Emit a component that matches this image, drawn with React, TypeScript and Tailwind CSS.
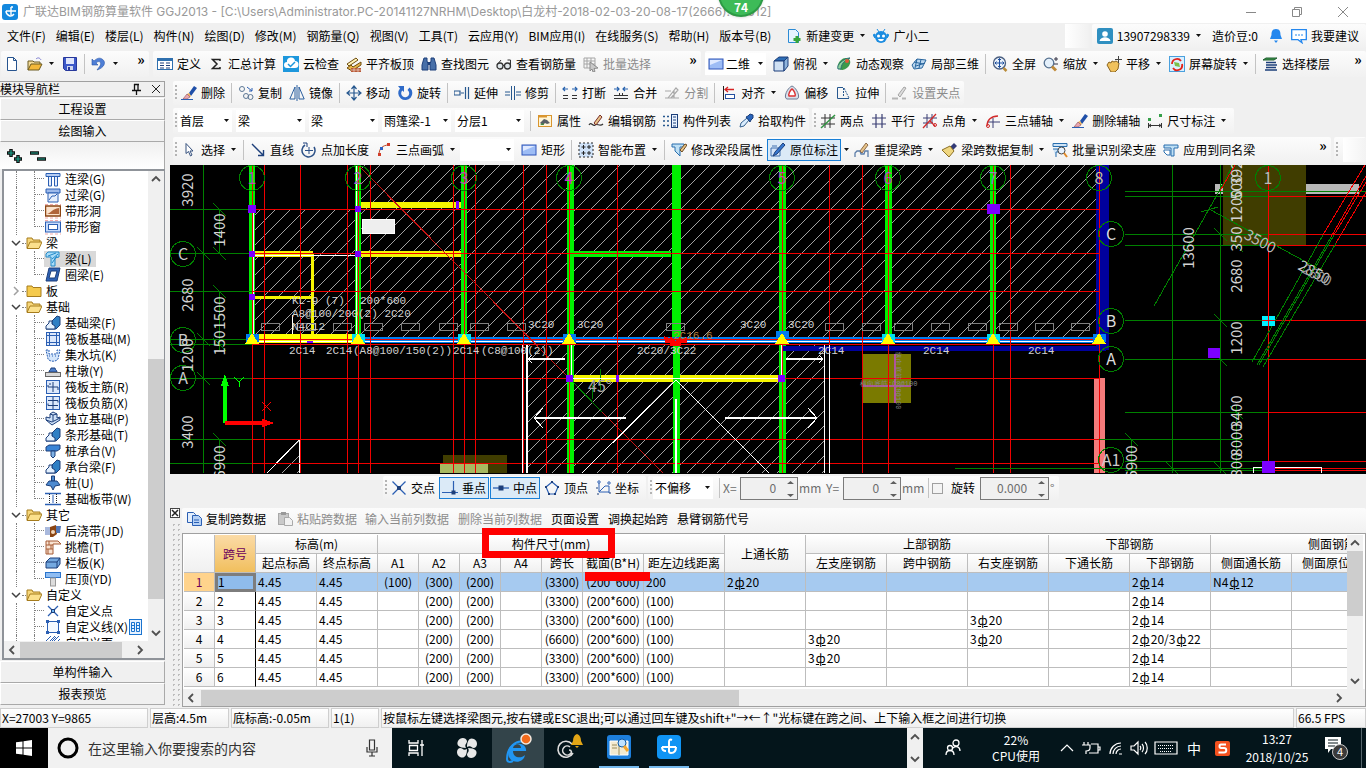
import type { ReactNode } from 'react';

const B = '#2b5fb3';
const N = '#1d3f7a';
const G = '#8c8c8c';

const box = (
  <>
    <rect x="1" y="3" width="14" height="10" fill="#9dbcf5" stroke="#2f55b8" />
    <path d="M2 4h12L2 9z" fill="#dfe9ff" />
  </>
);
const eraser = (
  <>
    <path d="M8 8l5-7 3 2-6 8z" fill="#1f4fa8" />
    <path d="M8 8l2 3-1 1-3-3z" fill="#f0b35a" />
    <path d="M6 9l3 3-3 2H2z" fill="#e9a6b0" stroke="#8a4b55" strokeWidth=".6" />
    <path d="M0 14.5h12" stroke={B} />
  </>
);
const footing = (
  <>
    <path d="M1 14h10l4-4V2l-3-1-5 5v4z" fill="#2f7fc4" stroke={N} />
    <path d="M1 14v-3l3-3V6h3v3l3 2v3z" fill="#e4f1ff" stroke={N} />
  </>
);
const folderOpen = (
  <>
    <path d="M1 13V3h5l1 2h7v3" fill="#f7d77b" stroke="#a67c1d" />
    <path d="M1 13.5L4 7h12l-3 6.5z" fill="#fbe08c" stroke="#a67c1d" />
  </>
);

const glyphs: Record<string, ReactNode> = {
  newDoc: <path d="M3.5 1.5h6l3 3v10h-9zM9.5 1.5v3h3" fill="#fff" stroke="#27548f" />,
  open: (
    <>
      <path d="M1 14V5h5l1 1h6v3" fill="#f5dc9a" stroke="#6b5a20" />
      <path d="M1 14l3-6h11l-3 6z" fill="#f3b83a" stroke="#6b5a20" />
      <path d="M9 3c2-2 4-1 5 1" fill="none" stroke="#7b7bd0" />
    </>
  ),
  save: (
    <>
      <path d="M1.500 1.500h13v13h-11l-2-2z" fill="#3c58c9" stroke="#27389b" />
      <rect x="4" y="2" width="8" height="6" fill="#dfe5fb" />
      <rect x="5" y="10" width="6" height="4" fill="#cfd6ee" />
      <rect x="6" y="11" width="2" height="3" fill="#27389b" />
    </>
  ),
  undo: <path d="M1 3v6h6L5 7c3-3 6-1 4 3l-3 4c7-2 10-8 5-11C8 1 5 3 3 5z" fill="#4f7fd6" stroke="#2855a8" strokeWidth=".6" />,
  define: (
    <>
      <rect x=".5" y="2.500" width="15" height="11" fill="#fff" stroke="#2e6fae" />
      <path d="M1 4h14" stroke="#2e6fae" strokeWidth="2" />
      <path d="M3 7h4M3 9.500h4M3 12h4M9 7h4M9 9.500h4M9 12h4" stroke={N} />
    </>
  ),
  sigma: <path d="M12 5V3.500H4.500L9 8l-4.500 4.500H12V11" fill="none" stroke="#222" strokeWidth="1.500" />,
  cloud: (
    <>
      <rect width="16" height="16" fill="#1d97dc" />
      <path d="M4 12a3 3 0 010-6 4 4 0 018-1 3.500 3.500 0 010 7z" fill="#fff" />
      <path d="M5 8l2.500 2.500L12 6" fill="none" stroke="#1d97dc" strokeWidth="1.500" />
    </>
  ),
  slab: (
    <>
      <path d="M1 8l9-6 2 2-9 6z" fill="#fff3b8" stroke="#6e4c0d" />
      <path d="M1 12l4-3 2 2 8-5v3l-9 6z" fill="#e8b54a" stroke="#6e4c0d" />
      <path d="M5 12h10v4H5z" fill="#b85835" />
      <path d="M5 14h10M8 12v4M12 12v4" stroke="#fff" strokeWidth=".5" />
    </>
  ),
  binoc: (
    <>
      <path d="M3 2h3v3l1 3v6H1V9zM13 2h-3v3L9 8v6h6V9z" fill="#476fa8" stroke={N} />
      <path d="M7 6h2v3H7z" fill={N} />
    </>
  ),
  glasses: (
    <>
      <circle cx="4" cy="10" r="3" fill="#dfe6ea" stroke="#333" strokeWidth="1.300" />
      <circle cx="11.500" cy="10" r="3" fill="#dfe6ea" stroke="#333" strokeWidth="1.300" />
      <path d="M7 9.500h1.500M1 9l4-5M14.500 9V4h-3" fill="none" stroke="#333" />
    </>
  ),
  batch: (
    <>
      <path d="M1 2h11v10H1zM1 5h11M1 8h11M4 2v10M8 2v10" fill="none" stroke="#a5a5a5" />
      <path d="M7 6l8 6-4 .500 1 3-2 .500-1-3-2 2z" fill="#c9c9c9" stroke={G} />
    </>
  ),
  rect: box,
  cube: (
    <>
      <path d="M1 5l5-4h9l-4 4z" fill="#2d6db5" stroke={N} />
      <path d="M1 5h10v10H1z" fill="#cfe0f3" stroke={N} />
      <path d="M11 5l4-4v9l-4 5z" fill="#8fb4dc" stroke={N} />
    </>
  ),
  orbit: (
    <>
      <ellipse cx="8" cy="8" rx="7" ry="5" transform="rotate(-40 8 8)" fill="#3b9a4c" />
      <path d="M2 13c-2-4 6-11 12-11-2 1-9 4-9 11z" fill="#8ed49a" stroke="#2a6e74" />
      <circle cx="11" cy="5" r="2" fill="#e05a3a" />
    </>
  ),
  part3d: (
    <>
      <path d="M1 9l5-6 9 1-4 8-8 1z" fill="#b9d6ef" stroke="#28659d" />
      <path d="M3 6l9 2M6 3l-2 9M10 3.500L8 12M14 7L5 10" fill="none" stroke="#28659d" />
    </>
  ),
  full: (
    <>
      <circle cx="7.500" cy="7" r="6" fill="#eaf2fb" stroke="#4b5f80" strokeWidth="1.300" />
      <path d="M7.500 2.500v9M3 7h9M6 4l1.500-1.500L9 4M6 10l1.500 1.500L9 10M4.500 5.500L3 7l1.500 1.500M10.500 5.500L12 7l-1.500 1.500" fill="none" stroke="#1d4f9f" />
      <path d="M11.500 12l3 3" stroke="#b98c3a" strokeWidth="2.500" />
    </>
  ),
  zoom: (
    <>
      <circle cx="6" cy="7" r="4.800" fill="#e4f0fb" stroke="#55708f" strokeWidth="1.300" />
      <path d="M9 10.500l4 4" stroke="#c08a3a" strokeWidth="3" />
      <path d="M11 3h4M13 1v4M11 8h4" stroke="#334" />
    </>
  ),
  pan: (
    <>
      <path d="M1 9l2-3 2 1 1-2 2 1 2-1 3 2-1 6-3 3H5z" fill="#f0c15c" stroke="#8a6420" />
      <path d="M12.500 0v7M9 3.500h7" stroke="#444" />
    </>
  ),
  screenRot: (
    <>
      <rect x=".5" y=".5" width="15" height="15" fill="#d9efff" stroke="#4aa0dd" />
      <path d="M3 8a5 5 0 019-3M13 8a5 5 0 01-9 4" fill="none" stroke="#e2231a" strokeWidth="1.800" />
      <path d="M5 6l5 1 1 4-5-1z" fill="#7bbf4b" />
    </>
  ),
  floors: (
    <>
      <path d="M1 4l3-2h11l-3 2z" fill="#3f9a4a" stroke="#1f5c30" />
      <path d="M4 6.500h10M4 9h11M4 11.500h10M3 14h12" stroke={N} strokeWidth="1.400" />
    </>
  ),
  eraser,
  copy: (
    <g fill="none" stroke="#5d7896">
      <circle cx="4" cy="4" r="2.500" />
      <circle cx="8" cy="11" r="2.500" />
      <circle cx="12.500" cy="12" r="2.500" />
      <path d="M9 2l5 4m0-3v3h-3" stroke={B} />
    </g>
  ),
  mirror: <path d="M6 2v12H.8zM10 2v12h5.200zM8 0v16" fill="none" stroke="#2a5e9e" />,
  move: <path d="M8 1v14M1 8h14M5.500 4L8 1l2.500 3M5.500 12L8 15l2.500-3M4 5.500L1 8l3 2.500M12 5.500L15 8l-3 2.500" fill="none" stroke="#27588f" strokeWidth="1.200" />,
  rotate: <path d="M1 1h6v6L5.300 5.500A4 4 0 1010.500 5l2-2.500A7 7 0 113 3.500z" fill="#2f6bc9" />,
  extend: <path d="M0 6h6v4H0zM7 8h3M11.500 2v12M14.500 2v12" fill="none" stroke="#27588f" strokeWidth="1.200" />,
  trim: <path d="M0 7h5M0 10h5M11 7h5M11 10h5M6.500 1v14M9.500 1v14" fill="none" stroke="#27588f" />,
  breakAt: (
    <g fill="none" stroke="#2762ae">
      <path d="M1 4h5M3 2L1 4l2 2M15 4h-5M13 2l2 2-2 2" strokeWidth="1.200" />
      <path d="M1 10.500h5M1 13.500h5M10 10.500h5M10 13.500h5" stroke="#333" />
    </g>
  ),
  merge: (
    <g fill="none" stroke="#2762ae">
      <path d="M1 4h5M4 2l2 2-2 2M15 4h-5M12 2l-2 2 2 2" strokeWidth="1.200" />
      <path d="M1 10.500h14M1 13.500h14M6.500 8v2M9.500 8v2" stroke="#333" />
    </g>
  ),
  split: <path d="M1 6h6M1 13h14M4 13l8-10 2 2-7 8M10 6v7" fill="none" stroke="#a8a8a8" strokeWidth="1.200" />,
  align: (
    <>
      <path d="M2.500 1v14" stroke="#222" />
      <path d="M13 4.500H4M7 2L4 4.500 7 7" fill="none" stroke="#d62323" strokeWidth="1.300" />
      <rect x="4.500" y="9.500" width="9" height="4" fill="#fff" stroke="#234fa0" />
    </>
  ),
  offset: (
    <>
      <path d="M8 1C3 3-1 13 3 14h10c4-1 0-11-5-13z" fill="#d9e0ea" stroke="#6c7a93" />
      <path d="M8 4c-2 1-4 6-3 7h6c1-1-1-6-3-7z" fill="#fff" stroke="#d33" strokeWidth="1.500" />
    </>
  ),
  stretch: (
    <>
      <path d="M8 2.500H2.500v11H14" fill="none" stroke="#27588f" />
      <path d="M8.500 3v9M9 3l5 10" fill="none" stroke="#27588f" strokeDasharray="2 1" />
    </>
  ),
  grip: (
    <>
      <path d="M6 10l6-8 2 1-6 9z" fill="#ddd" stroke="#a5a5a5" />
      <path d="M0 13.500h6M10 13.500h4" stroke="#b5b5b5" strokeWidth="2" />
    </>
  ),
  prop: (
    <>
      <rect x="1.500" y="2.500" width="13" height="11" fill="#fff5d6" stroke="#d9952e" />
      <path d="M1 3.500h9" stroke="#d9952e" strokeWidth="2" />
      <path d="M3 10l4-4 3 1 3 3-3 1-2-1-2 2z" fill="#5a5f66" />
      <path d="M3 12l3-2 1 2z" fill="#3a8b40" />
    </>
  ),
  editBar: (
    <>
      <path d="M1 12c2-4 4 2 6 0s5 2 8-1" fill="none" stroke="#333" strokeWidth="1.200" />
      <path d="M6 10l6-8 2 2-6 8z" fill="#e7c48a" stroke="#7a2f2a" />
    </>
  ),
  list: (
    <>
      <path d="M0 3.500h2M0 8h2M0 12.500h2M4 3.500h2M4 8h2M4 12.500h2" stroke="#27588f" strokeWidth="1.500" />
      <rect x="8.500" y="1.500" width="6" height="13" fill="#eaf3ff" stroke={N} />
      <path d="M10 4h3M10 7h3M10 10h3M10 13h3" stroke={N} />
    </>
  ),
  pick: (
    <>
      <path d="M2 14l1-4 6-5 2 2-5 6z" fill="#d9edff" stroke="#37628f" />
      <path d="M8 4l2-1 2-2 3 1v3l-2 2-1 2z" fill="#2a65bb" stroke={N} />
    </>
  ),
  twoPt: (
    <g fill="none" stroke="#333">
      <path d="M5 1v14M10 1v14M1 5h14M1 11h14" />
      <path d="M1 15L15 2" stroke="#2f9440" strokeWidth="1.500" />
    </g>
  ),
  parallel: <path d="M5 1v14M11 1v14M1 5h14M1 11h14" fill="none" stroke="#3a3f74" strokeWidth="1.200" />,
  angle: (
    <g fill="none" stroke="#3a3f74">
      <path d="M5 1v14M10 1v9M1 5h14M1 10h10" />
      <path d="M1 15L14 1M8 8l5 5" stroke="#d22b2b" strokeWidth="1.300" />
      <circle cx="13" cy="12" r="1.500" stroke="#d22b2b" />
    </g>
  ),
  threePt: (
    <g fill="none" stroke="#3a3f74">
      <path d="M8 5v10M3 9h12" />
      <path d="M2 13c0-6 4-10 11-10" stroke="#d22b2b" strokeWidth="1.300" />
      <circle cx="3" cy="13" r="1.500" stroke="#d22b2b" />
    </g>
  ),
  dim: (
    <>
      <rect x="1" y="5" width="3" height="3" fill="#36a04a" />
      <rect x="12" y="1" width="3" height="3" fill="#36a04a" />
      <path d="M1.500 10v5M14.500 10v5M2 12.500h12M4 11l-2 1.500L4 14M12 11l2 1.500-2 1.500" fill="none" stroke="#333" />
    </>
  ),
  select: <path d="M5 1.500v10l2.500-2 2 4.500 1.500-1-2-4h3z" fill="#fff" stroke="#35507d" />,
  line: <path d="M2 2l11 11M13.500 8v5.500H8" fill="none" stroke={N} strokeWidth="1.400" />,
  ptLen: (
    <g fill="none" stroke="#2a4f86">
      <path d="M8 5v7M4 8.500h8" />
      <path d="M4 3a6.500 6.500 0 109 2" strokeWidth="1.500" />
      <path d="M2 1h4v4" stroke={N} />
    </g>
  ),
  arc: (
    <>
      <path d="M3 13C3 7 6 3 13 3" fill="none" stroke="#b94a2c" />
      <rect x="2" y="11" width="3" height="3" fill="#d23c28" />
      <rect x="4" y="5" width="3" height="3" fill="#2d62c4" />
      <rect x="11" y="1" width="3" height="3" fill="#d23c28" />
    </>
  ),
  smart: (
    <>
      <rect x="1" y="1" width="14" height="14" fill="#cfe2f8" stroke="#222" strokeDasharray="2 2" />
      <path d="M5.500 3v4M3.500 5h4M11 3v4M9 5h4M5.500 9v4M3.500 11h4M11 9v4M9 11h4" stroke="#222" />
    </>
  ),
  modBeam: (
    <>
      <path d="M1 2h12v3H9v9L4 9V5H1z" fill="#bfe0f5" stroke="#2a6fae" />
      <path d="M9 8l5-6 2 1-5 7z" fill="#e9c58a" stroke="#6c4a22" />
    </>
  ),
  inPlace: (
    <>
      <path d="M1 6h9v8H1z" fill="#d4e4f8" stroke="#3e6fae" />
      <path d="M3 14l2-4 8-9 2 2-8 9z" fill="#3677d0" stroke={N} />
      <path d="M2 4h5" stroke="#3e6fae" />
    </>
  ),
  reSpan: (
    <>
      <path d="M1 15v-4l2-2h3l1 3h3l1-3h3v6" fill="none" stroke="#5c7da8" strokeWidth="1.300" />
      <path d="M6 9l6-8 2 2-6 8z" fill="#e9c58a" stroke="#8c6a4a" />
    </>
  ),
  brush: (
    <>
      <path d="M9 5l4-4 3 3-4 4z" fill="#333b77" />
      <path d="M1 8l8-4 4 5-5 6z" fill="#efd680" stroke="#8b6f24" />
    </>
  ),
  identify: (
    <>
      <path d="M1 1.500h14v3H1zM1 7h5v3H4v5" fill="#cfe4f6" stroke="#2a6fae" />
      <circle cx="9.500" cy="8.500" r="3.500" fill="#e7f3ff" stroke="#444" />
      <path d="M12 11l3 4" stroke="#e08a2a" strokeWidth="2" />
    </>
  ),
  apply: (
    <>
      <path d="M1 3h14v3h-4v8H8V6H1z" fill="#bfe0f5" stroke="#2a6fae" />
      <path d="M1 8h6v5H4l-3-3z" fill="#fff" stroke="#2a6fae" />
    </>
  ),
  change: (
    <>
      <path d="M2.500 1.500h7l3 3v10h-10z" fill="#e6f4ff" stroke="#2b8ad4" />
      <path d="M11 8v7M7.500 11.500h7" stroke="#37a53b" strokeWidth="3" />
    </>
  ),
  face: (
    <>
      <path d="M0 7l2-1v4zM16 7l-2-1v4zM4 1l2 3M12 1l-2 3" fill="#1b8ce0" stroke="#1b8ce0" />
      <circle cx="8" cy="9" r="6" fill="#1b8ce0" />
      <path d="M5 11c1 3 5 3 6 0z" fill="#fff" />
      <circle cx="5.500" cy="8" r="1.500" fill="#fff" />
      <circle cx="10.500" cy="8" r="1.500" fill="#fff" />
    </>
  ),
  user: (
    <>
      <rect width="16" height="16" rx="2" fill="#2f8fc0" />
      <circle cx="8" cy="6" r="2.800" fill="#fff" />
      <path d="M2.500 13c1-5 10-5 11 0z" fill="#fff" />
    </>
  ),
  bell: <path d="M8 1c-4 0-4.500 3-4.500 6L2 11h12l-1.500-4c0-3-.5-6-4.500-6zM6 12.500h4l-2 2.500z" fill="#2487ee" />,
  chat: (
    <>
      <path d="M.7 1.700h14.600v10H10l1 3-4-3H.7z" fill="#fff" stroke="#2487ee" strokeWidth="1.300" />
      <path d="M4 7h8" stroke="#2487ee" strokeDasharray="2 1" />
    </>
  ),
  cross: (
    <>
      <path d="M1.500 1.500l13 13M14.500 1.500l-13 13" stroke={B} strokeWidth="1.300" />
      <rect x="6" y="6" width="4" height="4" fill={N} />
    </>
  ),
  perp: (
    <>
      <path d="M11.500 1v11M0 12.500h16" stroke={B} strokeWidth="1.200" />
      <rect x="9.500" y="10.500" width="4" height="4" fill={N} />
    </>
  ),
  mid: (
    <>
      <path d="M0 8h16" stroke={B} strokeWidth="1.300" />
      <rect x="5.500" y="5.500" width="5" height="5" fill={N} />
    </>
  ),
  vertex: (
    <>
      <path d="M8 2l6 5-3 7H5L2 7z" fill="none" stroke={B} strokeWidth="1.200" />
      <path d="M7 1h2v2H7zM1 6h2v2H1zM13 6h2v2h-2zM4 13h2v2H4zM10 13h2v2h-2z" fill={N} />
    </>
  ),
  coord: (
    <g fill="none" stroke={B}>
      <path d="M4 3v9h10M4 12l6-6h4v7" />
      <circle cx="4" cy="2" r="1.200" />
      <circle cx="14" cy="3" r="1.200" />
      <path d="M1 8h2M2 14h2M14 13h2" stroke={N} />
    </g>
  ),
  copySpan: (
    <>
      <path d="M1.500 1.500h6l2 2v8h-8z" fill="#e3eefc" stroke={B} />
      <path d="M6.500 4.500h6l3 3v7h-9z" fill="#b6d1f5" stroke={B} />
      <path d="M8 9h5M8 11.500h5" stroke={B} />
    </>
  ),
  pasteSpan: (
    <>
      <rect x="1.500" y="2.500" width="10" height="11" fill="#c9c9c9" stroke="#a9a9a9" />
      <rect x="4" y="1" width="5" height="3" fill="#999" />
      <path d="M7.500 6.500h5l3 3v5h-8z" fill="#f1f1f1" stroke="#a9a9a9" />
    </>
  ),
  tBeam: (
    <>
      <path d="M1 2.500h14v3H1z" fill="#b6cdf3" stroke={B} />
      <path d="M3.500 6v9h3V6M9.500 6v9h3V6" fill="#e6eefc" stroke={B} />
    </>
  ),
  lintel: (
    <>
      <path d="M1 2h14v4H1z" fill="#9db9ea" stroke={B} />
      <path d="M3 6h10v9H3z" fill="#e6eefc" stroke={B} />
      <path d="M4 13l3-4h3l2-2" stroke={B} fill="none" />
    </>
  ),
  stripHole: (
    <>
      <rect x=".5" y="3" width="15" height="10" fill="#fbe3cd" stroke="#8b4513" strokeWidth="1.500" />
      <path d="M2 11c4-1 5-5 12-6v6z" fill="#b0653a" />
      <path d="M0 1.500h16M0 15h16" stroke="#f2a9a9" strokeDasharray="3 2" />
    </>
  ),
  stripWin: (
    <>
      <rect x=".5" y="3" width="15" height="10" fill="#c7dbfb" stroke={B} />
      <rect x="3.500" y="5.500" width="9" height="5" fill="#fff" stroke={B} />
      <path d="M0 1.500h16M0 15h16" stroke="#f2a9a9" strokeDasharray="3 2" />
    </>
  ),
  beam: (
    <>
      <path d="M1 3l2-2h11v5l-4 1v8H6V6H1z" fill="#a9dcf8" stroke="#2389c8" />
      <path d="M3 5l8-3M7 12l5-7M7 8l6-5" stroke="#2389c8" />
    </>
  ),
  ring: (
    <>
      <path d="M4 1h11l-3 13H1z" fill="#2f62b5" stroke={N} />
      <path d="M6 4h6l-2 7H4z" fill="#fff" stroke={N} />
    </>
  ),
  folder: <path d="M1 13.500V3h5l1 1.500h8v9z" fill="#f5ca4d" stroke="#a67c1d" />,
  folderOpen,
  footing,
  raft: (
    <g fill="none" stroke={B}>
      <rect x="1.500" y="1.500" width="13" height="13" fill="#dce8fb" />
      <rect x="4.500" y="4.500" width="7" height="7" />
      <path d="M4.500 1v14M11.500 1v14M1 4.500h14M1 11.500h14" />
    </g>
  ),
  pit: (
    <>
      <path d="M1 3h3v4h8V3h3l-2 9c-2 3-8 3-10 0z" fill="#d4e6fb" stroke={B} strokeDasharray="2 1" />
      <path d="M4 9h9" stroke={B} strokeDasharray="1 2" />
    </>
  ),
  pier: (
    <>
      <path d="M4 9c0-2 2-2 2-4h4c0 2 2 2 2 4z" fill="#4b7dc9" stroke={N} />
      <rect x=".5" y="9.500" width="15" height="4" fill="#d9d9d9" stroke="#666" />
    </>
  ),
  raftMain: (
    <>
      <rect x="1.500" y="1.500" width="13" height="13" fill="#dce8fb" stroke={B} />
      <path d="M8 3v10M5 6V4M3 8h10v3M3 8V6" fill="none" stroke={N} />
    </>
  ),
  raftNeg: (
    <>
      <rect x="1.500" y="1.500" width="13" height="13" fill="#dce8fb" stroke={B} />
      <path d="M3 5.500h10v2M3 10.500h10M8 2v12M3 10.500v-2" fill="none" stroke={N} />
    </>
  ),
  isoFoot: (
    <>
      <path d="M1 9l6 5 8-5V6l-3 1V3L8 1 5 3v4L1 6z" fill="#cfe1f7" stroke={N} />
      <path d="M5 3l3 1v6M8 4l4-1M1 9l6 2 8-4" fill="none" stroke={N} />
    </>
  ),
  cap: (
    <>
      <path d="M1 4l3-2h11v4l-3 2H1z" fill="#3a84d6" stroke={N} />
      <path d="M6 8h4v5l-2 2-2-2z" fill="#7fb2e6" stroke={N} />
    </>
  ),
  pile: (
    <>
      <path d="M6.500 1h3v5h-3z" fill="#4d8ad0" stroke={N} />
      <path d="M4 6h8l3 4-5 1-2 4-2-4-5-1z" fill="#4d8ad0" stroke={N} />
    </>
  ),
  plate: (
    <>
      <path d="M0 2.500h16M0 13.500h16" stroke={B} strokeWidth="1.400" />
      <path d="M4.500 3v10M11.500 3v10" stroke="#222" strokeDasharray="1 1" />
      <path d="M8 4v8" stroke={B} />
    </>
  ),
  postCast: (
    <>
      <path d="M0 4h6v8H0z" fill="#a9b9dd" />
      <path d="M5 4l6-2 1 9-4 3H5z" fill="#8b4513" />
      <path d="M11 3h5l-1 7h-4z" fill="#5377b5" />
      <circle cx="8" cy="9" r="2" fill="#f4d9bb" />
    </>
  ),
  eave: (
    <>
      <path d="M1 2h12l3 3H8v10H1z" fill="#f8e3d2" stroke="#a65a34" />
      <path d="M1 6h7M1 10h7M4 2v4M6 6v4M3 10v5" stroke="#a65a34" />
    </>
  ),
  panel: (
    <>
      <path d="M1 7l4-4h10v6l-3 4H1z" fill="#74a9e0" stroke={N} />
      <path d="M1 7h11l3-4M12 7v6" fill="none" stroke={N} />
    </>
  ),
  coping: (
    <>
      <rect x=".5" y="1.500" width="15" height="5" fill="#8fbdf2" stroke="#2a74cc" />
      <rect x="5.500" y="7" width="5" height="8" fill="#ddd" stroke="#999" />
    </>
  ),
  custPt: (
    <>
      <path d="M3 3l10 10M13 3L3 13" stroke={B} strokeWidth="1.300" />
      <rect x="6.500" y="6.500" width="3" height="3" fill="#6fb4f0" stroke={N} />
    </>
  ),
  custLine: (
    <>
      <rect x="2.500" y="2.500" width="11" height="11" fill="#f4f9ff" stroke={B} />
      <path d="M1 1h3v3H1zM12 1h3v3h-3zM1 12h3v3H1zM12 12h3v3h-3z" fill={B} />
    </>
  ),
  custFace: <path d="M1 6l5-5M5 6l5-5M9 6l5-5M1 12l10-10M5 14L15 4" stroke={B} />,
};

const Glyph = ({ name }: { name: string }) => (
  <svg className="w-4 h-4 shrink-0" viewBox="0 0 16 16">
    {glyphs[name]}
  </svg>
);

const Caret = () => (
  <svg className="w-[7px] h-1 shrink-0" viewBox="0 0 7 4">
    <path d="M1 0h5L3.500 3z" fill="#111" />
  </svg>
);

const Sep = () => <span className="w-px h-5 mx-[2px] shrink-0 bg-[#c3c3c3]" />;

const Handle = () => (
  <span className="w-[2px] h-4 ml-[2px] shrink-0 bg-[repeating-linear-gradient(to_bottom,#b4b4b4_0_2px,transparent_2px_4px)]" />
);

const More = () => (
  <button aria-label="更多" className="self-start w-4 leading-4 text-sm font-bold text-black">
    »
  </button>
);

interface ToolProps {
  icon: string;
  label?: string;
  caret?: boolean;
  disabled?: boolean;
  active?: boolean;
}

const Tool = ({ icon, label, caret, disabled, active }: ToolProps) => (
  <button
    disabled={disabled}
    className={`flex items-center h-[22px] gap-1 px-[3px] shrink-0 whitespace-nowrap ${
      disabled ? 'text-[#8c8c8c]' : 'text-black'
    } ${active ? 'bg-[#dbeaf7] outline outline-1 -outline-offset-1 outline-[#1a7fd6]' : ''}`}
  >
    <Glyph name={icon} />
    {label && <span>{label}</span>}
    {caret && <span className="w-2 flex justify-end"><Caret /></span>}
  </button>
);

const Bar = ({ className = '', children }: { className?: string; children: ReactNode }) => (
  <div className={`flex items-center gap-px rounded-xs bg-linear-to-b from-[#fcfcfc] to-[#f1f1f1] ${className}`}>
    {children}
  </div>
);

const Combo = ({ label, value, width, icon }: { label: string; value: string; width: string; icon?: string }) => (
  <span className={`relative flex items-center h-[22px] shrink-0 mr-[3px] bg-white ${width}`}>
    {icon && <span className="pl-[3px] flex"><Glyph name={icon} /></span>}
    <select aria-label={label} className="appearance-none w-full h-full bg-transparent text-black pl-[2px]">
      <option>{value}</option>
    </select>
    <span className="absolute right-[2px] top-[9px] pointer-events-none"><Caret /></span>
  </span>
);

const menus = [
  '文件(F)', '编辑(E)', '楼层(L)', '构件(N)', '绘图(D)', '修改(M)', '钢筋量(Q)', '视图(V)',
  '工具(T)', '云应用(Y)', 'BIM应用(I)', '在线服务(S)', '帮助(H)', '版本号(B)',
];

const TitleBar = () => (
  <header className="relative flex items-center h-[23px] bg-white text-[#999999]">
    <svg className="w-4 h-4 ml-[2px] mr-[5px]" viewBox="0 0 16 16">
      <rect width="16" height="16" rx="3" fill="#1388de" />
      <path d="M9 3v8M4 7h10M9 3h2M4 7c0 4 5 7 8 3" fill="none" stroke="#fff" strokeWidth="1.400" />
    </svg>
    <h1 className="flex-1 whitespace-nowrap font-['Inter','Noto_Sans_CJK_SC',sans-serif]">
      广联达BIM钢筋算量软件 GGJ2013 - [C:\Users\Administrator.PC-20141127NRHM\Desktop\白龙村-2018-02-03-20-08-17(2666).GGJ12]
    </h1>
    <div className="absolute left-[718px] -top-[29px] w-[46px] h-[46px] rounded-full border-2 border-[#2c9a45] bg-[#3dbb58] text-white font-bold text-center pt-[26px] leading-4 shadow">
      74
    </div>
    <button aria-label="最小化" className="w-[46px] flex justify-center">
      <svg className="w-3 h-3" viewBox="0 0 12 12"><path d="M1 6.500h10" stroke="#888" /></svg>
    </button>
    <button aria-label="还原" className="w-[46px] flex justify-center">
      <svg className="w-3 h-3" viewBox="0 0 12 12">
        <path d="M1.500 3.500h7v7h-7zM3.500 3v-1.500h7v7H9" fill="none" stroke="#888" />
      </svg>
    </button>
    <button aria-label="关闭" className="w-[46px] flex justify-center">
      <svg className="w-3 h-3" viewBox="0 0 12 12"><path d="M1 1l10 10M11 1L1 11" stroke="#888" /></svg>
    </button>
  </header>
);

const MenuBar = () => (
  <nav className="flex items-center h-[26px] pl-[7px] text-black whitespace-nowrap">
    <div className="flex gap-[10px]">
      {menus.map((m) => (
        <button key={m}>{m}</button>
      ))}
    </div>
    <div className="flex items-center gap-px ml-3">
      <Tool icon="change" label="新建变更" caret />
      <Tool icon="face" label="广小二" />
    </div>
    <div className="ml-auto flex items-center gap-[3px]">
      <span className="w-6 h-6 bg-linear-to-r from-white to-[#f1f1f1]" />
      <Bar className="h-6 pl-[2px] pr-1">
        <Tool icon="user" label="13907298339" caret />
        <button className="px-[6px]">造价豆:0</button>
        <Tool icon="bell" />
        <Tool icon="chat" label="我要建议" />
      </Bar>
    </div>
  </nav>
);

const MainTools = () => (
  <div className="flex h-[26px] mt-[2px] gap-1 overflow-hidden">
    <Bar className="w-[148px] shrink-0 ml-px">
      <Tool icon="newDoc" />
      <Tool icon="open" caret />
      <Tool icon="save" />
      <Sep />
      <Tool icon="undo" caret />
      <span className="flex-1" />
      <More />
    </Bar>
    <Bar className="w-[548px] shrink-0 pl-px">
      <Tool icon="define" label="定义" />
      <Tool icon="sigma" label="汇总计算" />
      <Tool icon="cloud" label="云检查" />
      <Tool icon="slab" label="平齐板顶" />
      <Tool icon="binoc" label="查找图元" />
      <Tool icon="glasses" label="查看钢筋量" />
      <Tool icon="batch" label="批量选择" disabled />
      <span className="flex-1" />
      <More />
    </Bar>
    <Bar className="flex-1">
      <Combo label="视图模式" value="二维" width="w-[61px]" icon="rect" />
      <Tool icon="cube" label="俯视" caret />
      <Tool icon="orbit" label="动态观察" />
      <Tool icon="part3d" label="局部三维" />
      <Sep />
      <Tool icon="full" label="全屏" />
      <Tool icon="zoom" label="缩放" caret />
      <Tool icon="pan" label="平移" caret />
      <Tool icon="screenRot" label="屏幕旋转" caret />
      <Sep />
      <Tool icon="floors" label="选择楼层" />
      <span className="flex-1" />
      <More />
    </Bar>
  </div>
);

const DrawTools = () => (
  <div className="flex flex-col items-start gap-[3px] pt-px pb-[2px]">
    <Bar className="h-6 pr-px">
      <Handle />
      <Tool icon="eraser" label="删除" />
      <Sep />
      <Tool icon="copy" label="复制" />
      <Tool icon="mirror" label="镜像" />
      <Sep />
      <Tool icon="move" label="移动" />
      <Tool icon="rotate" label="旋转" />
      <Sep />
      <Tool icon="extend" label="延伸" />
      <Tool icon="trim" label="修剪" />
      <Sep />
      <Tool icon="breakAt" label="打断" />
      <Tool icon="merge" label="合并" />
      <Tool icon="split" label="分割" disabled />
      <Sep />
      <Tool icon="align" label="对齐" caret />
      <Tool icon="offset" label="偏移" />
      <Tool icon="stretch" label="拉伸" />
      <Sep />
      <Tool icon="grip" label="设置夹点" disabled />
    </Bar>
    <div className="flex gap-[3px]">
      <Bar className="h-[26px]">
        <Handle />
        <Combo label="楼层" value="首层" width="w-[54px]" />
        <Combo label="构件类型" value="梁" width="w-[69px]" />
        <Combo label="构件" value="梁" width="w-[69px]" />
        <Combo label="构件名称" value="雨篷梁-1" width="w-[69px]" />
        <Combo label="分层" value="分层1" width="w-[69px]" />
        <Sep />
        <Tool icon="prop" label="属性" />
        <Tool icon="editBar" label="编辑钢筋" />
        <Tool icon="list" label="构件列表" />
        <Tool icon="pick" label="拾取构件" />
      </Bar>
      <Bar className="h-[26px] pr-1">
        <Handle />
        <Tool icon="twoPt" label="两点" />
        <Tool icon="parallel" label="平行" />
        <Tool icon="angle" label="点角" caret />
        <Tool icon="threePt" label="三点辅轴" caret />
        <Tool icon="eraser" label="删除辅轴" />
        <Tool icon="dim" label="尺寸标注" caret />
      </Bar>
    </div>
    <div className="flex w-full gap-[3px]">
      <Bar className="flex-1 h-[26px]">
        <Handle />
        <Tool icon="select" label="选择" caret />
        <Sep />
        <Tool icon="line" label="直线" />
        <Tool icon="ptLen" label="点加长度" />
        <Tool icon="arc" label="三点画弧" caret />
        <Combo label="画弧方式" value="" width="w-[54px]" />
        <Tool icon="rect" label="矩形" />
        <Sep />
        <Tool icon="smart" label="智能布置" caret />
        <Sep />
        <Tool icon="modBeam" label="修改梁段属性" />
        <Tool icon="inPlace" label="原位标注" active />
        <button aria-label="原位标注选项" className="w-2 flex justify-center"><Caret /></button>
        <Tool icon="reSpan" label="重提梁跨" caret />
        <Tool icon="brush" label="梁跨数据复制" caret />
        <Tool icon="identify" label="批量识别梁支座" />
        <Tool icon="apply" label="应用到同名梁" />
        <span className="flex-1" />
        <More />
      </Bar>
      <Bar className="w-8 h-[26px]">
        <Handle />
        <span className="w-6 h-6 ml-1 bg-linear-to-r from-white to-[#f3f3f3]" />
      </Bar>
    </div>
  </div>
);

interface Node {
  icon: string;
  text: string;
  group?: boolean;
  last?: boolean;
  selected?: boolean;
  closed?: boolean;
}

const tree: Node[] = [
  { icon: 'tBeam', text: '连梁(G)' },
  { icon: 'lintel', text: '过梁(G)' },
  { icon: 'stripHole', text: '带形洞' },
  { icon: 'stripWin', text: '带形窗', last: true },
  { icon: 'folderOpen', text: '梁', group: true },
  { icon: 'beam', text: '梁(L)', selected: true },
  { icon: 'ring', text: '圈梁(E)', last: true },
  { icon: 'folder', text: '板', group: true, closed: true },
  { icon: 'folderOpen', text: '基础', group: true },
  { icon: 'footing', text: '基础梁(F)' },
  { icon: 'raft', text: '筏板基础(M)' },
  { icon: 'pit', text: '集水坑(K)' },
  { icon: 'pier', text: '柱墩(Y)' },
  { icon: 'raftMain', text: '筏板主筋(R)' },
  { icon: 'raftNeg', text: '筏板负筋(X)' },
  { icon: 'isoFoot', text: '独立基础(P)' },
  { icon: 'footing', text: '条形基础(T)' },
  { icon: 'cap', text: '桩承台(V)' },
  { icon: 'footing', text: '承台梁(F)' },
  { icon: 'pile', text: '桩(U)' },
  { icon: 'plate', text: '基础板带(W)', last: true },
  { icon: 'folderOpen', text: '其它', group: true },
  { icon: 'postCast', text: '后浇带(JD)' },
  { icon: 'eave', text: '挑檐(T)' },
  { icon: 'panel', text: '栏板(K)' },
  { icon: 'coping', text: '压顶(YD)', last: true },
  { icon: 'folderOpen', text: '自定义', group: true },
  { icon: 'custPt', text: '自定义点' },
  { icon: 'custLine', text: '自定义线(X)' },
  { icon: 'custFace', text: '自定义面' },
];

const arrows = {
  up: 'M2 8l4-4 4 4',
  down: 'M2 4l4 4 4-4',
  left: 'M8 2L4 6l4 4',
  right: 'M4 2l4 4-4 4',
};

const ScrollArrow = ({ dir }: { dir: keyof typeof arrows }) => (
  <button aria-label={dir} className="w-4 h-4 shrink-0 flex items-center justify-center">
    <svg className="w-3 h-3" viewBox="0 0 12 12">
      <path d={arrows[dir]} fill="none" stroke="#505050" strokeWidth="1.800" />
    </svg>
  </button>
);

const TreeRow = ({ node }: { node: Node }) =>
  node.group ? (
    <li className="flex items-center h-4 pl-[6px]">
      <svg className="w-3 h-3" viewBox="0 0 12 12">
        <path
          d={node.closed ? 'M4 2l4 4-4 4' : 'M2 4l4 4 4-4'}
          fill="none"
          stroke={node.closed ? '#a0a0a0' : '#404040'}
          strokeWidth="1.500"
        />
      </svg>
      <span className="w-1 border-t border-dotted border-[#808080]" />
      <Glyph name={node.icon} />
      <span className="ml-1">{node.text}</span>
    </li>
  ) : (
    <li className="flex h-4 pl-3">
      <span className="w-[18px] h-4 border-l border-dotted border-[#808080]" />
      <span className={`border-l border-dotted border-[#808080] ${node.last ? 'h-2' : 'h-4'}`} />
      <span className="w-[9px] h-2 border-b border-dotted border-[#808080]" />
      <span className={`flex items-center gap-1 px-px ${node.selected ? 'bg-[#d9d9d9] pr-1' : ''}`}>
        <Glyph name={node.icon} />
        {node.text}
      </span>
      {node.icon === 'custLine' && (
        <svg className="w-[13px] h-4" viewBox="0 0 13 16">
          <rect x=".5" y=".5" width="12" height="15" fill="#e8f2ff" stroke="#1a74cf" />
          <path d="M2.500 3.500h3v9h-3zM7.500 3.500h3v9h-3zM2.500 6.500h3M2.500 9.500h3M7.500 6.500h3M7.500 9.500h3" fill="none" stroke="#1a74cf" />
        </svg>
      )}
    </li>
  );

const NavButton = ({ children }: { children: ReactNode }) => (
  <button className="h-[22px] shrink-0 border border-[#a9a9a9] border-l-white border-t-white bg-[#f0f0f0] text-center">
    {children}
  </button>
);

const SidePanel = () => (
  <aside className="w-[165px] shrink-0 flex flex-col min-h-0 pb-[2px] text-black whitespace-nowrap">
    <div className="flex items-center h-4 mt-px mb-px border border-[#a0a0a0] border-l-0">
      <h2 className="flex-1">模块导航栏</h2>
      <svg className="w-3 h-3 mr-2" viewBox="0 0 12 12">
        <path d="M4.500 1v6M8 1v6M4 1.500h5M2 7.500h9M6.500 8v4" fill="none" stroke="#111" strokeWidth="1.300" />
      </svg>
      <svg className="w-3 h-3 mr-[2px]" viewBox="0 0 12 12"><path d="M2 2l8 8M10 2l-8 8" stroke="#222" /></svg>
    </div>
    <NavButton>工程设置</NavButton>
    <NavButton>绘图输入</NavButton>
    <div className="h-[27px] shrink-0 bg-linear-to-b from-[#f0f0f0] to-white px-[6px] pt-[6px] border-r border-[#a9a9a9]">
      <svg className="w-10 h-4" viewBox="0 0 40 16">
        <path d="M1 5h8M5 1v8M8 11h8M12 7v8M24 5h9M31 11h9" stroke="#111" strokeWidth="3.500" />
        <path d="M2 5h6M5 2v6M9 11h6M12 8v6M25 5h7M32 11h7" stroke="#1ba38c" strokeWidth="1.200" />
      </svg>
    </div>
    <div className="flex-1 min-h-0 flex flex-col ml-[2px] mb-px border-2 border-r border-[#8f9399] bg-white overflow-hidden">
      <div className="flex-1 min-h-0 flex overflow-hidden">
        <ul className="flex-1 overflow-hidden">
          {tree.map((n) => (
            <TreeRow key={n.text} node={n} />
          ))}
        </ul>
        <div className="w-4 shrink-0 flex flex-col bg-[#f0f0f0]">
          <ScrollArrow dir="up" />
          <span className="grow-[172]" />
          <span className="grow-[239] bg-[#cdcdcd]" />
          <span className="grow-[26]" />
          <ScrollArrow dir="down" />
        </div>
      </div>
      <div className="flex h-[17px] shrink-0 pr-4 bg-[#f0f0f0] items-center">
        <ScrollArrow dir="left" />
        <span className="w-[102px] h-4 bg-[#cdcdcd]" />
        <span className="flex-1" />
        <ScrollArrow dir="right" />
      </div>
    </div>
    <NavButton>单构件输入</NavButton>
    <NavButton>报表预览</NavButton>
  </aside>
);

const axes = [82, 94, 130, 177, 188, 200, 283, 294, 305, 353, 376, 399, 447, 612, 659, 692, 718, 823, 840, 929];
const levels = [44, 88, 126, 174, 179, 213, 274, 298];
const rightLevels = [26, 31, 69, 80, 155, 194, 247, 296, 303, 305];
const bubbles: [number, number, string, string][] = [
  [82, 13, '1', '#b44fb4'], [188, 13, '2', '#a06ab4'], [294, 13, '3', '#b44fb4'], [399, 13, '4', '#c43cc4'],
  [612, 13, '5', '#b44fb4'], [718, 13, '6', '#b44fb4'], [823, 13, '7', '#8a8ab4'], [929, 13, '8', '#c8c896'],
  [13, 89, 'C', '#ccc'], [13, 175, 'B', '#ccc'], [13, 213, 'A', '#ccc'],
  [941, 69, 'C', '#ddd'], [941, 156, 'B', '#ddd'], [941, 194, 'A', '#ddd'], [941, 295, 'A1', '#ccc'],
  [1098, 13, '1', '#bbb'],
];
const spanDims: [number, number, string][] = [
  [17, 25, '3920'], [49, 65, '1400'], [17, 130, '2680'], [49, 148, '1500'], [49, 178, '150'], [17, 190, '1200'],
  [17, 267, '3400'], [49, 297, '6900'], [1018, 83, '13600'], [1066, 4, '3920'], [1066, 41, '1200'], [1066, 22, '500'],
  [1066, 74, '350'], [1066, 111, '2680'], [1066, 173, '1200'], [1066, 247, '3400'], [1066, 275, '8000'],
  [1066, 300, '800'], [961, 297, '6900'],
];
const stirrups = [91, 127, 163, 194, 231, 269, 300, 337, 496, 655, 692, 724, 761, 798, 829, 865, 901];
const rebarNotes: [number, number, string][] = [
  [122, 139, 'KL-9 (7)'], [190, 139, '200*600'], [122, 152, 'A8@100/200(2) 2C20'], [122, 165, 'N4C12'],
  [358, 163, '3C20'], [407, 163, '3C20'], [570, 163, '3C20'], [618, 163, '3C20'],
  [119, 189, '2C14'], [156, 189, '2C14'], [183, 189, '(A8@100/150(2))'], [283, 189, '2C14'], [311, 189, '(C8@100(2))'],
  [467, 189, '2C20/3C22'], [648, 189, '2C14'], [753, 189, '2C14'], [858, 189, '2C14'],
];
const ticks = [
  [49, 44], [33, 88], [49, 88], [49, 126], [33, 174], [49, 179], [33, 213], [49, 274],
  [1050, 69], [1050, 155], [1050, 194], [961, 274], [1066, 247], [1050, 303], [1002, 303], [1066, 80], [1066, 31],
];

const Drawing = () => (
  <svg className="block w-full h-full" shapeRendering="crispEdges">
    <defs>
      <pattern id="hatch" width="15" height="15" patternUnits="userSpaceOnUse">
        <path d="M-1 1L1 -1M-1 16L16 -1M14 16L16 14" stroke="#b4b4b4" strokeWidth="0.9" shapeRendering="geometricPrecision" />
      </pattern>
    </defs>
    <rect width="100%" height="100%" fill="#000" />
    <path d="M85 44H188V0H926V172H85z" fill="url(#hatch)" />
    <rect x="357" y="180" width="297" height="128" fill="url(#hatch)" />
    <path d="M97 308L129 275V308" fill="url(#hatch)" stroke="#fff" />

    <path d="M191 40H291M85 89H143M191 89H291" stroke="#f5f500" strokeWidth="6" />
    <path d="M142 89V170M85 132H142" stroke="#f5f500" strokeWidth="3" />
    <path d="M403 213H608" stroke="#f5f500" strokeWidth="7" />

    <path d="M82 0V170M188 0V170M294 0V172M823 0V172" stroke="#00f000" strokeWidth="6" />
    <path d="M400 0V308M612 0V308M718 0V172M506 180V308" stroke="#00f000" strokeWidth="7" />
    <path d="M506 0V180" stroke="#00f000" strokeWidth="9" />
    <path d="M403 89H501" stroke="#00f000" strokeWidth="6" />

    <path d="M612 183H933V0" fill="none" stroke="#00009c" strokeWidth="5" />
    <rect x="926" y="0" width="13" height="185" fill="#00009c" />
    <path d="M191 175H929" stroke="#007cf0" strokeWidth="6" />
    <path d="M191 176H929M929 0V170M82 44H188M82 90H188M83 44V170M186 0V170M122 150V170" stroke="#fff" />
    <rect x="76" y="169" width="115" height="9" fill="#ffff00" />
    <path d="M88 176H183" stroke="#fff" />

    <rect x="924" y="213" width="11" height="95" fill="#f47a7a" />
    <rect x="273" y="290" width="64" height="18" fill="#403d00" />
    <rect x="270" y="299" width="48" height="9" fill="#a8b860" />
    <rect x="693" y="189" width="48" height="49" fill="#7a7a00" />
    <path d="M725 189V238M693 221H741" stroke="#b050a0" strokeWidth="2" />
    <rect x="1045" y="19" width="144" height="10" fill="#b8b8b8" />
    <rect x="1053" y="0" width="83" height="80" fill="#403d00" />

    {/* grid axes */}
    {axes.map((x) => (
      <path key={x} d={`M${x + 0.5} 0V308`} stroke="#f00000" />
    ))}
    {levels.map((y) => (
      <g key={y}>
        <path d={`M0 ${y + 0.5}H82`} stroke="#008000" />
        <path d={`M82 ${y + 0.5}H929`} stroke="#f00000" />
      </g>
    ))}
    {rightLevels.map((y) => (
      <g key={y}>
        <path d={`M955 ${y + 0.5}H1098`} stroke="#008000" />
        <path d={`M1098 ${y + 0.5}H2400`} stroke={y === 26 ? '#008000' : '#f00000'} />
      </g>
    ))}
    <path d="M1098.500 0V308" stroke="#ff0000" strokeWidth="1" />
    <path d="M33.500 0V308M49.500 44V88M49.500 126V185M49.500 274V308M1002.500 0V308M1050.500 0V308M1066.500 240V308M929 274.500H1073M785 303.500H955M961.500 274V308" stroke="#008000" fill="none" />
    {ticks.map(([x, y], i) => (
      <path key={i} d={`M${x - 6} ${y - 6}L${x + 7} ${y + 7}`} stroke="#008000" />
    ))}
    <path d="M188 0L399 213M432 247L493 308" stroke="#c81414" />
    <path d="M399 213L432 247M430 204V225M422 220V234" stroke="#008000" />

    <path d="M984 141L1047 30 1063 0M1031 47L1048 42M1039 44L1147 103M1082 197L1153 70M1087 200L1161 72M1089 200L1164 70M1093 202L1166 78" fill="none" stroke="#008000" />
    <path d="M1153 70L1195 0M1161 72L1200 4M1164 70L1204 4M1166 78L1206 10M1050 26L1065 0" stroke="#f00000" />

    {/* slab outlines and slope arrows */}
    <path d="M352 180V308M654 180V308M659 180V308M403 213H608M401 180V213M611 180V213" stroke="#fff" />
    <path d="M357 180V308" stroke="#fff" strokeWidth="2" />
    <path d="M506 234V308" stroke="#fff" strokeWidth="2" />
    <path d="M506 215L412 308M506 215L599 308" stroke="#fff" />
    <path d="M358 194H395M365 253H456M555 253H647M616 194H653" stroke="#fff" strokeWidth="2" />
    <path d="M362 190L358 194l4 4M373 243L364 253l9 10M638 243l9 10-9 10M649 190l4 4-4 4" fill="none" stroke="#fff" />
    <path d="M1083 308V302H1151V308" fill="none" stroke="#fff" />

    {[
      [78, 40, 8, 8], [185, 41, 6, 6], [286, 36, 3, 8], [79, 86, 6, 6], [185, 86, 6, 6], [79, 129, 6, 6], [137, 176, 6, 2],
      [396, 210, 7, 7], [446, 210, 3, 7], [608, 210, 7, 7], [817, 39, 13, 10], [1038, 183, 12, 10], [1092, 296, 13, 12],
    ].map(([x, y, w, h], i) => (
      <rect key={i} x={x} y={y} width={w} height={h} fill="#7c00ff" />
    ))}
    <rect x="1092" y="151" width="13" height="10" fill="#00f0ff" />
    <path d="M1098.500 150V162M1092 155.500H1105" stroke="#f00000" />
    <rect x="192" y="54" width="32" height="14" fill="#eee" stroke="#fff" />

    {stirrups.map((x) => (
      <rect key={x} x={x + 0.5} y="158.500" width="18" height="7" fill="none" stroke="#808080" />
    ))}
    {[82, 188, 294, 399, 612, 718, 823, 929].map((x) => (
      <g key={x}>
        <rect x={x - 6} y={x === 612 ? 166 : 169} width="13" height="8" fill={[188, 294, 718, 823].includes(x) ? '#00e0f0' : '#007cf0'} />
        <path d={`M${x} 168l7 11h-14z`} fill="#ffff00" />
      </g>
    ))}
    <path d="M494 171l5 2 2-1 4 4 4-4 3 2 5-2v6h-6v3h-11v-3h-5z" fill="#ff0000" />

    <path d="M55 258V218" stroke="#00ff00" strokeWidth="4" />
    <path d="M55 209l4 12h-8z" fill="#00ff00" />
    <path d="M64 212l5 5 5-5M69 217v5" fill="none" stroke="#00ff00" />
    <path d="M55 258H94" stroke="#ff0000" strokeWidth="4" />
    <path d="M104 258l-12-4v8z" fill="#ff0000" />
    <path d="M92 237l9 9M101 237l-9 9" stroke="#ff0000" />

    {bubbles.map(([x, y, t, fill], i) => (
      <g key={i}>
        <circle cx={x} cy={y} r="12.500" fill="none" stroke="#008000" />
        <text x={x} y={y + 6} textAnchor="middle" fontSize="16" fill={fill}>{t}</text>
      </g>
    ))}
    {spanDims.map(([x, y, t], i) => (
      <text key={i} transform={`translate(${x + 6} ${y}) rotate(-90)`} textAnchor="middle" fontSize="15" fill="#d2d2d2">
        {t}
      </text>
    ))}
    <text transform="translate(1073 73) rotate(28)" fontSize="15" fill="#bbb">3500</text>
    <text transform="translate(1127 104) rotate(28)" fontSize="15" fill="#ccc">2850</text>
    <text transform="translate(1131 107) rotate(28)" fontSize="14" fill="#999">2600</text>
    <text x="418" y="227" fontSize="16" fill="#aaa">45°</text>
    <g className="font-['Liberation_Mono',monospace]" fontSize="11" fill="#d0d0d0">
      {rebarNotes.map(([x, y, t], i) => (
        <text key={i} x={x} y={y}>{t}</text>
      ))}
      <text x="503" y="174" fill="#b88040">2C16.6</text>
      <text x="690" y="221" fontSize="7" fill="#888">横向底筋:C8@100</text>
      <text transform="translate(726 187) rotate(90)" fontSize="7" fill="#888">纵向底筋:C8@100</text>
    </g>
  </svg>
);

const NumberBox = ({ id, value, width }: { id: string; value: string; width: string }) => (
  <span className={`flex h-[23px] border border-[#7a7a7a] bg-[#f0f0f0] ${width}`}>
    <input id={id} aria-label={id} defaultValue={value} className="w-full min-w-0 text-right pr-2 text-[#6d6d6d]" />
    <svg className="w-[13px] h-full shrink-0" viewBox="0 0 13 21">
      <path d="M3 6h7L6.500 3zM3 16h7l-3.500 3z" fill="#606060" />
    </svg>
  </span>
);

const SnapBar = () => (
  <div className="flex h-[34px] shrink-0 items-start pt-[2px] pl-[213px] gap-[2px]">
    <Bar className="h-6 pr-1">
      <Handle />
      <Tool icon="cross" label="交点" />
      <Tool icon="perp" label="垂点" active />
      <Tool icon="mid" label="中点" active />
      <Tool icon="vertex" label="顶点" />
      <Tool icon="coord" label="坐标" />
    </Bar>
    <Bar className="h-6 pr-1 text-[#6d6d6d]">
      <Handle />
      <Combo label="偏移方式" value="不偏移" width="w-[60px]" />
      <Sep />
      <label htmlFor="offsetX" className="w-4">X=</label>
      <NumberBox id="offsetX" value="0" width="w-[58px]" />
      <span className="w-[26px]">mm</span>
      <label htmlFor="offsetY" className="w-4">Y=</label>
      <NumberBox id="offsetY" value="0" width="w-[58px]" />
      <span className="w-[23px]">mm</span>
      <Sep />
      <label className="flex items-center text-black gap-2 mr-1">
        <input type="checkbox" className="appearance-none w-[11px] h-[11px] border border-[#a0a0a0] bg-[#f4f4f4]" />
        旋转
      </label>
      <NumberBox id="angle" value="0.000" width="w-[69px]" />
      <span>°</span>
    </Bar>
  </div>
);

const columns = [
  'w-[31px]', 'w-[41px]', 'w-[61px]', 'w-[61px]', 'w-[41px]', 'w-[41px]', 'w-[41px]', 'w-[41px]', 'w-[41px]', 'w-[61px]',
  'w-[81px]', 'w-[81px]', 'w-[81px]', 'w-[81px]', 'w-[81px]', 'w-[81px]', 'w-[81px]', 'w-[81px]', 'w-[81px]', 'w-[81px]',
];

const subHeads = ['起点标高', '终点标高', 'A1', 'A2', 'A3', 'A4', '跨长', '截面(B*H)', '距左边线距离'];
const barHeads = ['左支座钢筋', '跨中钢筋', '右支座钢筋', '下通长筋', '下部钢筋', '侧面通长筋', '侧面原位筋', '拉筋'];

// # stands for the HRB400 rebar sign
const rows = [
  ['1', '4.45', '4.45', '(100)', '(300)', '(200)', '', '(3300)', '(200*600)', '200', '2#20', '', '', '', '', '2#14', 'N4#12', '', ''],
  ['2', '4.45', '4.45', '', '(200)', '(200)', '', '(3300)', '(200*600)', '(100)', '', '', '', '', '', '2#14', '', '', ''],
  ['3', '4.45', '4.45', '', '(200)', '(200)', '', '(3300)', '(200*600)', '(100)', '', '', '', '3#20', '', '2#14', '', '', ''],
  ['4', '4.45', '4.45', '', '(200)', '(200)', '', '(6600)', '(200*600)', '(100)', '', '3#20', '', '3#20', '', '2#20/3#22', '', '', ''],
  ['5', '4.45', '4.45', '', '(200)', '(200)', '', '(3300)', '(200*600)', '(100)', '', '3#20', '', '', '', '2#14', '', '', ''],
  ['6', '4.45', '4.45', '', '(200)', '(200)', '', '(3300)', '(200*600)', '(100)', '', '', '', '', '', '2#14', '', '', ''],
];

const CellText = ({ value }: { value: string }) => (
  <>
    {value.split('#').map((part, i) => (
      <span key={i}>
        {i > 0 && <span className="inline-block w-3 text-center underline underline-offset-1">ф</span>}
        {part}
      </span>
    ))}
  </>
);

const headCell = 'border-r border-b border-[#bdbdbd] bg-linear-to-b from-white to-[#f0f0f0] font-normal p-0 overflow-hidden';

const SpanTable = () => (
  <table className="table-fixed w-[1270px] border-separate border-spacing-0 text-black whitespace-nowrap">
    <colgroup>
      {columns.map((w, i) => (
        <col key={i} className={w} />
      ))}
    </colgroup>
    <thead>
      <tr className="h-[19px]">
        <th rowSpan={2} className={headCell} />
        <th rowSpan={2} className="border-r border-b border-[#bdbdbd] bg-linear-to-b from-[#fbdba6] to-[#f1bf5c] font-normal p-0 text-[#6b005c]">
          跨号
        </th>
        <th colSpan={2} className={headCell}>标高(m)</th>
        <th colSpan={7} className={headCell}>构件尺寸(mm)</th>
        <th rowSpan={2} className={headCell}>上通长筋</th>
        <th colSpan={3} className={headCell}>上部钢筋</th>
        <th colSpan={2} className={headCell}>下部钢筋</th>
        <th colSpan={3} className={headCell}>侧面钢筋</th>
      </tr>
      <tr className="h-[19px]">
        {[...subHeads, ...barHeads].map((h) => (
          <th key={h} className={headCell}>{h}</th>
        ))}
      </tr>
    </thead>
    <tbody>
      {rows.map((cells, r) => (
        <tr key={r} className={`h-[19px] ${r === 0 ? 'bg-[#a6caf0]' : 'bg-white'}`}>
          <th
            scope="row"
            className={`border-r border-b border-[#bdbdbd] font-normal p-0 ${
              r === 0 ? 'bg-[#ffd38c] text-[#6b005c]' : 'bg-linear-to-b from-white to-[#f0f0f0]'
            }`}
          >
            {r + 1}
          </th>
          {cells.map((value, c) => (
            <td
              key={c}
              className={`p-0 border-b border-[#bdbdbd] overflow-hidden ${
                c === 0 ? 'border-r border-r-black' : 'border-r'
              } ${r === 0 && c === 0 ? 'bg-[#8fbcec] outline outline-3 -outline-offset-3 outline-[#7d7d7d] pl-[3px]' : ''} ${
                c >= 3 && c <= 8 ? 'text-center' : 'pl-[2px]'
              }`}
            >
              <CellText value={value} />
            </td>
          ))}
        </tr>
      ))}
    </tbody>
  </table>
);

const SpanPane = () => (
  <section className="flex h-[199px] shrink-0">
    <div className="w-3 shrink-0 flex flex-col">
      <svg className="w-[10px] h-[10px]" viewBox="0 0 10 10">
        <rect x=".5" y=".5" width="9" height="9" fill="#fff" stroke="#444" />
        <path d="M2 2l6 6M8 2L2 8" stroke="#222" strokeWidth="1.500" />
      </svg>
      <div className="flex-1 mt-1 ml-px bg-[radial-gradient(circle,#bdbdbd_1px,transparent_1px)] bg-size-[5px_5px]" />
    </div>
    <div className="relative flex-1 min-w-0 flex flex-col">
      <Bar className="h-[25px] pb-[3px] shrink-0 px-px gap-[5px]!">
        <Tool icon="copySpan" label="复制跨数据" />
        <Tool icon="pasteSpan" label="粘贴跨数据" disabled />
        <button disabled className="text-[#8c8c8c] pr-1">输入当前列数据</button>
        <button disabled className="text-[#8c8c8c] pr-1">删除当前列数据</button>
        <button className="text-black pr-1">页面设置</button>
        <button className="text-black pr-1">调换起始跨</button>
        <button className="text-black">悬臂钢筋代号</button>
      </Bar>
      <div className="flex-1 min-h-0 flex flex-col border border-[#a0a0a0] pt-px bg-white">
        <div className="flex flex-1 min-h-0 pl-px">
          <div className="flex-1 min-w-0 overflow-hidden">
            <SpanTable />
          </div>
          <div className="w-4 shrink-0 flex flex-col bg-[#f0f0f0] mr-[2px]">
            <ScrollArrow dir="up" />
            <span className="h-[65px] bg-[#cdcdcd]" />
            <span className="flex-1" />
            <ScrollArrow dir="down" />
          </div>
        </div>
        <div className="flex h-[17px] shrink-0 items-center bg-[#f0f0f0] pr-[18px]">
          <ScrollArrow dir="left" />
          <span className="w-[538px] h-4 ml-[2px] bg-[#cdcdcd]" />
          <span className="flex-1" />
          <ScrollArrow dir="right" />
        </div>
      </div>
      {/* review marks over the section-size column */}
      <div className="absolute left-[300px] top-5 w-[133px] h-[30px] border-[7px] border-[#ff0000]" />
      <div className="absolute left-[403px] top-16 w-[65px] h-[9px] bg-[#ff0000]" />
    </div>
  </section>
);

const statusCell = 'h-5 px-px border border-[#cfcfcf] bg-linear-to-b from-white to-[#f0f0f0] leading-[18px]';

const StatusBar = () => (
  <footer className="flex h-[21px] pt-px gap-[2px] shrink-0 text-black whitespace-nowrap">
    <span className={`w-[148px] ${statusCell}`}>X=27003 Y=9865</span>
    <span className={`w-[79px] ${statusCell}`}>层高:4.5m</span>
    <span className={`w-[98px] ${statusCell}`}>底标高:-0.05m</span>
    <span className={`w-12 ${statusCell}`}>1(1)</span>
    <span className={`flex-1 ${statusCell}`}>
      按鼠标左键选择梁图元,按右键或ESC退出;可以通过回车键及shift+"→←↑"光标键在跨之间、上下输入框之间进行切换
    </span>
    <span className={`w-[70px] ${statusCell}`}>66.5 FPS</span>
  </footer>
);

const taskApp = 'w-[50px] h-10 flex items-center justify-center';

const TaskBar = () => (
  <div className="flex h-10 shrink-0 items-center bg-[#04151b] text-white whitespace-nowrap">
    <button aria-label="开始" className="w-12 h-10 bg-black flex items-center justify-center">
      <svg className="w-4 h-4" viewBox="0 0 16 16">
        <path d="M0 2.300L6.500 1.400V7.500H0zM7.500 1.200L16 0v7.500H7.500zM0 8.500h6.500v6.100L0 13.700zM7.500 8.500H16V16l-8.500-1.200z" fill="#fff" />
      </svg>
    </button>
    <div className="w-[344px] h-10 bg-[#f1f1f1] flex items-center pl-[9px] pr-[14px]">
      <svg className="w-[22px] h-[22px] mr-[9px]" viewBox="0 0 22 22">
        <circle cx="11" cy="11" r="9" fill="none" stroke="#000" strokeWidth="3" />
      </svg>
      <input
        aria-label="搜索"
        placeholder="在这里输入你要搜索的内容"
        className="flex-1 min-w-0 text-sm placeholder:text-[#333333]"
      />
      <svg className="w-3 h-[18px]" viewBox="0 0 12 18">
        <path d="M3.500 1h5v10h-5zM1 8v5h10V8M6 13v4M3 17h6" fill="none" stroke="#333" strokeWidth="1.200" />
      </svg>
    </div>
    <button aria-label="任务视图" className={taskApp}>
      <svg className="w-5 h-5" viewBox="0 0 20 20">
        <path d="M2 2v3h9V2M2.500 7.500h8v5h-8zM2 18v-3h9v3M15 2v16M13 7h4" fill="none" stroke="#fff" strokeWidth="1.300" />
      </svg>
    </button>
    <button aria-label="浏览器" className={taskApp}>
      <svg className="w-6 h-6" viewBox="0 0 24 24">
        <path d="M11 12C4 12 1 9 3 5s8-4 9 0c0 3-3 3-1 7zM12 11c0-7 3-10 7-8s4 8 0 9c-3 0-3-3-7-1zM13 12c7 0 10 3 8 7s-8 4-9 0c0-3 3-3 1-7zM12 13c0 7-3 10-7 8s-4-8 0-9c3 0 3 3 7 1z" fill="#e8e8e8" />
      </svg>
    </button>
    <button aria-label="Internet Explorer" className="w-[52px] h-10 flex items-center justify-center bg-[#33444a]">
      <svg className="w-7 h-8" viewBox="0 0 28 32">
        <path d="M22 19H9c0 7 8 8 12 4-1 6-7 8-12 6-7-3-6-14 1-17 7-2 13 2 12 7zM9 16h8c0-5-7-5-8 0z" fill="#2196f3" />
        <path d="M20 10C12 8 3 15 3 27c0 4 4 3 6 2" fill="none" stroke="#2196f3" strokeWidth="2" />
        <circle cx="22" cy="7" r="5" fill="#f26a1b" stroke="#f5e9df" strokeWidth="1.500" />
      </svg>
    </button>
    <button aria-label="提醒" className={taskApp}>
      <svg className="w-8 h-8" viewBox="0 0 32 32">
        <path d="M19 12A8 8 0 1020 21M17 15a4.500 4.500 0 100 7c2-1 2-4-1-4" fill="none" stroke="#ddd" strokeWidth="1.600" />
        <path d="M24 2c-3 1-4 4-4 7l-2 4h12l-2-4c0-3-1-6-4-7zM22 14h4l-2 2z" fill="#e2a516" />
      </svg>
    </button>
    <button aria-label="图库" className={taskApp}>
      <span className="w-10 h-10 flex items-center justify-center border-b-2 border-[#76b9ed]">
        <svg className="w-6 h-6" viewBox="0 0 24 24">
          <rect width="24" height="24" rx="3" fill="#1d7fdc" />
          <path d="M3 6h8l1 2 1-2h8v14H3z" fill="#f3ead0" stroke="#fff" />
          <path d="M12 8v12M5 10h5M5 13h5" stroke="#9a8c5a" />
          <circle cx="15" cy="8" r="4" fill="#bfe2ff" stroke="#0e5ba8" />
          <path d="M17 11l4 5" stroke="#f3a52c" strokeWidth="3" />
        </svg>
      </span>
    </button>
    <button aria-label="广联达" className={taskApp}>
      <span className="w-10 h-10 flex items-center justify-center border-b-2 border-[#76b9ed]">
        <svg className="w-6 h-6" viewBox="0 0 24 24">
          <rect width="24" height="24" rx="4" fill="#1094f4" />
          <path d="M15 5c-2-1-3 0-3 2v10M5 12h14M19 12c0 4-2 6-5 6-2 0-2-1-2-2M5 12c0 3 1 4 4 4" fill="none" stroke="#fff" strokeWidth="2" />
        </svg>
      </span>
    </button>
    <span className="flex-1" />
    <span className="w-4 h-10 bg-[#f0f0f0] flex flex-col justify-between py-px">
      <ScrollArrow dir="up" />
      <ScrollArrow dir="down" />
    </span>
    <svg className="w-4 h-5 ml-[22px]" viewBox="0 0 16 20">
      <g fill="none" stroke="#fff" strokeWidth="1.300">
        <circle cx="11" cy="5" r="3" />
        <circle cx="5" cy="10" r="2.500" />
        <path d="M1 17c0-6 8-6 8 0M8 10c3-3 7-1 7 3" />
      </g>
    </svg>
    <div className="w-[110px] text-center leading-4">
      <div>22%</div>
      <div>CPU使用</div>
    </div>
    <svg className="w-[124px] h-5 -ml-4 mr-2" viewBox="0 0 124 20">
      <g fill="none" stroke="#fff" strokeWidth="1.200">
        <path d="M6 13l6-6 6 6" />
        <path d="M29 4v3M33 4v3M27 7h8v3c0 2-2 3-4 3v3M36 6h7v9h-9M43 9h2v3h-2" />
        <path d="M55 16a11 11 0 0111-11M58 16a8 8 0 018-8M61 16a5 5 0 015-5M64 16h3" />
        <path d="M76 8h3l4-4v12l-4-4h-3zM85 8c1 1 1 3 0 4M87 6c2 2 2 6 0 8M90 4c3 3 3 9 0 12" />
        <path d="M100 4h22v12h-22z" />
        <path d="M103 7.500h16M103 10.500h16M105 13.500h12" strokeDasharray="1 1" />
      </g>
    </svg>
    <span className="text-sm mr-[14px]">中</span>
    <svg className="w-[15px] h-[15px]" viewBox="0 0 15 15">
      <rect width="15" height="15" rx="2" fill="#f4511e" />
      <path d="M11 3.500H6c-2 0-2 3.500 0 3.500h3c3 0 3 4.500 0 4.500H3.500" fill="none" stroke="#fff" strokeWidth="2" />
    </svg>
    <div className="w-[94px] text-center leading-[18px]">
      <div>13:27</div>
      <div>2018/10/25</div>
    </div>
    <svg className="w-6 h-6 mr-[13px]" viewBox="0 0 24 24">
      <path d="M1 1h16v12H7l-3 4v-4H1z" fill="#fff" />
      <path d="M4 4h10M4 7h10M4 10h7" stroke="#04151b" />
      <circle cx="16" cy="16" r="7.500" fill="#3a3a3a" stroke="#ccc" />
      <text x="16" y="20" textAnchor="middle" fontSize="11" fill="#fff">4</text>
    </svg>
    <span className="w-[5px] h-10 border-l border-[#55656b]" />
  </div>
);

const App = () => {
  return (
    <div className="h-screen flex flex-col overflow-hidden bg-[#f0f0f0] text-xs leading-4 font-['Noto_Sans_CJK_SC',sans-serif]">
      <TitleBar />
      <MenuBar />
      <MainTools />
      <main className="flex flex-1 min-h-0 pt-[3px]">
        <SidePanel />
        <div className="flex-1 min-w-0 flex flex-col pl-[5px]">
          <div className="pl-[3px]">
            <DrawTools />
          </div>
          <div className="flex-1 min-h-0 overflow-hidden">
            <Drawing />
          </div>
          <SnapBar />
          <SpanPane />
        </div>
      </main>
      <StatusBar />
      <TaskBar />
    </div>
  );
};

export default App;
